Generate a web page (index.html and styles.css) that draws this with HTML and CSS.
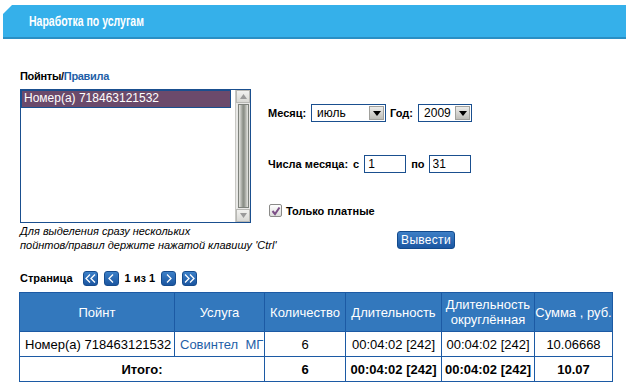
FILE: index.html
```html
<!DOCTYPE html>
<html lang="ru">
<head>
  <meta charset="UTF-8">
  <title>Наработка по услугам</title>
  <link rel="stylesheet" href="styles.css">
</head>
<body>
  <div class="head">
    <h1>Наработка по услугам</h1>
  </div>

  <div class="content">
    <div class="filter">
      <div class="leftCol">
        <div class="caption"><b>Пойнты/</b><a href="#">Правила</a></div>
        <div class="listbox">
          <div class="items">
            <div class="item sel">Номер(а) 718463121532</div>
          </div>
          <div class="scroll">
            <span class="sbtn"><svg width="7" height="5" viewBox="0 0 7 5"><path d="M0 5 L3.5 0 L7 5Z" fill="#9a9a9a"/></svg></span>
            <span class="track"><span class="thumb"></span></span>
            <span class="sbtn"><svg width="7" height="5" viewBox="0 0 7 5"><path d="M0 0 L3.5 5 L7 0Z" fill="#9a9a9a"/></svg></span>
          </div>
        </div>
        <p class="hint">Для выделения сразу нескольких<br>пойнтов/правил держите нажатой клавишу 'Ctrl'</p>
      </div>

      <div class="rightCol">
        <div class="row month">
          <label>Месяц:</label>
          <div class="sel m"><span>июль</span><i><svg width="8" height="5" viewBox="0 0 8 5"><path d="M0 0 L8 0 L4 5Z" fill="#000"/></svg></i></div>
          <label>Год:</label>
          <div class="sel y"><span>2009</span><i><svg width="8" height="5" viewBox="0 0 8 5"><path d="M0 0 L8 0 L4 5Z" fill="#000"/></svg></i></div>
        </div>
        <div class="row days">
          <label class="wide">Числа месяца:</label>
          <label class="wide">с</label>
          <input type="text" value="1" class="num">
          <label>по</label>
          <input type="text" value="31" class="num">
        </div>
        <div class="row paid">
          <span class="check"><svg width="10" height="10" viewBox="0 0 10 10"><path d="M1.5 5 L4 8 L8.5 1.5" stroke="#7b4f86" stroke-width="2" fill="none"/></svg></span>
          <label>Только платные</label>
        </div>
        <div class="row go">
          <button class="btn">Вывести</button>
        </div>
      </div>
    </div>

    <div class="pager">
      <b>Страница</b>
      <span class="pbtn"><svg width="11" height="9" viewBox="0 0 11 9"><path d="M5 0.5 L1 4.5 L5 8.5 M10 0.5 L6 4.5 L10 8.5" stroke="#fff" stroke-width="1.3" fill="none"/></svg></span>
      <span class="pbtn"><svg width="6" height="9" viewBox="0 0 6 9"><path d="M5 0.5 L1 4.5 L5 8.5" stroke="#fff" stroke-width="1.3" fill="none"/></svg></span>
      <b class="pnum">1 из 1</b>
      <span class="pbtn"><svg width="6" height="9" viewBox="0 0 6 9"><path d="M1 0.5 L5 4.5 L1 8.5" stroke="#fff" stroke-width="1.3" fill="none"/></svg></span>
      <span class="pbtn"><svg width="11" height="9" viewBox="0 0 11 9"><path d="M1 0.5 L5 4.5 L1 8.5 M6 0.5 L10 4.5 L6 8.5" stroke="#fff" stroke-width="1.3" fill="none"/></svg></span>
    </div>

    <table class="report">
      <tr>
        <th class="c1">Пойнт</th>
        <th class="c2">Услуга</th>
        <th class="c3">Количество</th>
        <th class="c4">Длительность</th>
        <th class="c5">Длительность<br>округлённая</th>
        <th class="c6">Сумма , руб.</th>
      </tr>
      <tr>
        <td class="left">Номер(а) 718463121532</td>
        <td class="left"><a href="#">Совинтел&nbsp; МГ</a></td>
        <td>6</td>
        <td>00:04:02 [242]</td>
        <td>00:04:02 [242]</td>
        <td>10.06668</td>
      </tr>
      <tr class="total">
        <td colspan="2">Итого:</td>
        <td>6</td>
        <td>00:04:02 [242]</td>
        <td>00:04:02 [242]</td>
        <td>10.07</td>
      </tr>
    </table>
  </div>
</body>
</html>
```

FILE: styles.css
```css
*{
  margin: 0;
  padding: 0;
  box-sizing: border-box;
}
body{
  font-family: "Liberation Sans", Arial, sans-serif;
  font-size: 11px;
  color: #000;
  background: #fff;
}
a{
  color: #1f5fa8;
  text-decoration: none;
}

/* header */
.head{
  margin: 5px 0 0 3px;
  height: 34px;
  background: #35b0ea;
  border-bottom: 2px solid #2a8fc4;
  clip-path: polygon(9px 0, 100% 0, 100% 100%, 0 100%, 0 9px);
}
.head h1{
  display: inline-block;
  font-size: 14px;
  font-weight: bold;
  color: #fff;
  line-height: 32px;
  margin-left: 26px;
  white-space: nowrap;
  transform: scaleX(0.75);
  transform-origin: left center;
}

.content{
  padding-left: 20px;
}

/* filter */
.filter{
  display: flex;
  margin-top: 31px;
}
.leftCol{
  width: 231px;
}
.caption{
  font-size: 11px;
  line-height: 13px;
  height: 19px;
  font-weight: bold;
  letter-spacing: -0.3px;
}
.listbox{
  display: flex;
  width: 231px;
  height: 134px;
  border: 1px solid #1a4f8f;
}
.items{
  flex: 1;
}
.item{
  font-size: 12px;
  line-height: 14px;
  padding-left: 2px;
}
.item.sel{
  background: #6b4a6b;
  color: #fff;
}
.scroll{
  width: 15px;
  display: flex;
  flex-direction: column;
  background: #e8e8e6;
  border-left: 1px solid #c8c8c4;
}
.sbtn{
  height: 13px;
  display: flex;
  align-items: center;
  justify-content: center;
  background: linear-gradient(#f2f2f0, #d8d8d4);
  border: 1px solid #b8b8b4;
}
.track{
  flex: 1;
  display: flex;
  justify-content: center;
  padding: 1px 0;
}
.thumb{
  width: 11px;
  border: 1px solid #7e827c;
  background: linear-gradient(to right, #e6e6e2, #8c9088 45%, #8c9088 55%, #e6e6e2);
}
.hint{
  font-style: italic;
  font-size: 11px;
  line-height: 14px;
  margin-top: 1px;
  white-space: nowrap;
}

.rightCol{
  margin-left: 17px;
  padding-top: 34px;
}
.row{
  display: flex;
  align-items: center;
  font-weight: bold;
}
.row label{
  margin-right: 5px;
}
.sel{
  display: flex;
  height: 18px;
  border: 1px solid #1a4f8f;
  font-weight: normal;
  font-size: 12px;
  margin-right: 4px;
}
.sel span{
  flex: 1;
  padding-left: 5px;
  line-height: 16px;
}
.sel i{
  width: 15px;
  margin: 1px;
  display: flex;
  align-items: center;
  justify-content: center;
  background: linear-gradient(#ececea, #bdbdb8);
  border: 1px solid #a0a09c;
}
.sel.m{
  width: 75px;
}
.sel.y{
  width: 54px;
}
.days{
  margin-top: 33px;
}
.days label{
  margin-right: 4px;
}
.days label.wide{
  margin-right: 5px;
}
.num{
  width: 42px;
  height: 18px;
  border: 1px solid #1a4f8f;
  font-family: "Liberation Sans", Arial, sans-serif;
  font-size: 12px;
  padding-left: 3px;
  margin-right: 5px;
}
.paid{
  margin-top: 31px;
}
.check{
  width: 13px;
  height: 13px;
  border: 1px solid #8a8a88;
  border-radius: 2px;
  background: linear-gradient(#fff, #dcdcda);
  display: flex;
  align-items: center;
  justify-content: center;
  margin: 0 4px 0 1px;
}
.go{
  margin-top: 14px;
  padding-left: 129px;
}
.btn{
  width: 58px;
  height: 18px;
  border: 1px solid #124a8c;
  border-radius: 3px;
  background: linear-gradient(#3d7fc6, #1b57a2);
  color: #fff;
  font-family: "Liberation Sans", Arial, sans-serif;
  font-size: 12px;
  letter-spacing: 0.3px;
}

/* pager */
.pager{
  display: flex;
  align-items: center;
  margin-top: 18px;
  height: 16px;
  gap: 6px;
}
.pager b{
  font-size: 11px;
  margin-right: 4px;
}
.pager b.pnum{
  margin: 0;
}
.pbtn{
  width: 15px;
  height: 15px;
  border-radius: 3px;
  background: linear-gradient(#3c80c8, #1a55a0);
  border: 1px solid #164c8e;
  display: flex;
  align-items: center;
  justify-content: center;
}

/* table */
.report{
  border-collapse: collapse;
  table-layout: fixed;
  margin: 6px 0 0 -1px;
  width: 594px;
  font-size: 13px;
}
.report th, .report td{
  border: 1px solid #1c5aa4;
  white-space: nowrap;
}
.report th{
  background: #3378bd;
  color: #fff;
  font-weight: normal;
  height: 39px;
  line-height: 15px;
}
.report td{
  height: 25px;
  text-align: center;
  padding: 0 2px;
}
.report td.left{
  text-align: left;
  padding-left: 5px;
}
.c1{ width: 155px; }
.c2{ width: 90px; }
.c3{ width: 81px; }
.c4{ width: 96px; }
.c5{ width: 93px; }
.c6{ width: 78px; }
.total td{
  font-weight: bold;
}
```
